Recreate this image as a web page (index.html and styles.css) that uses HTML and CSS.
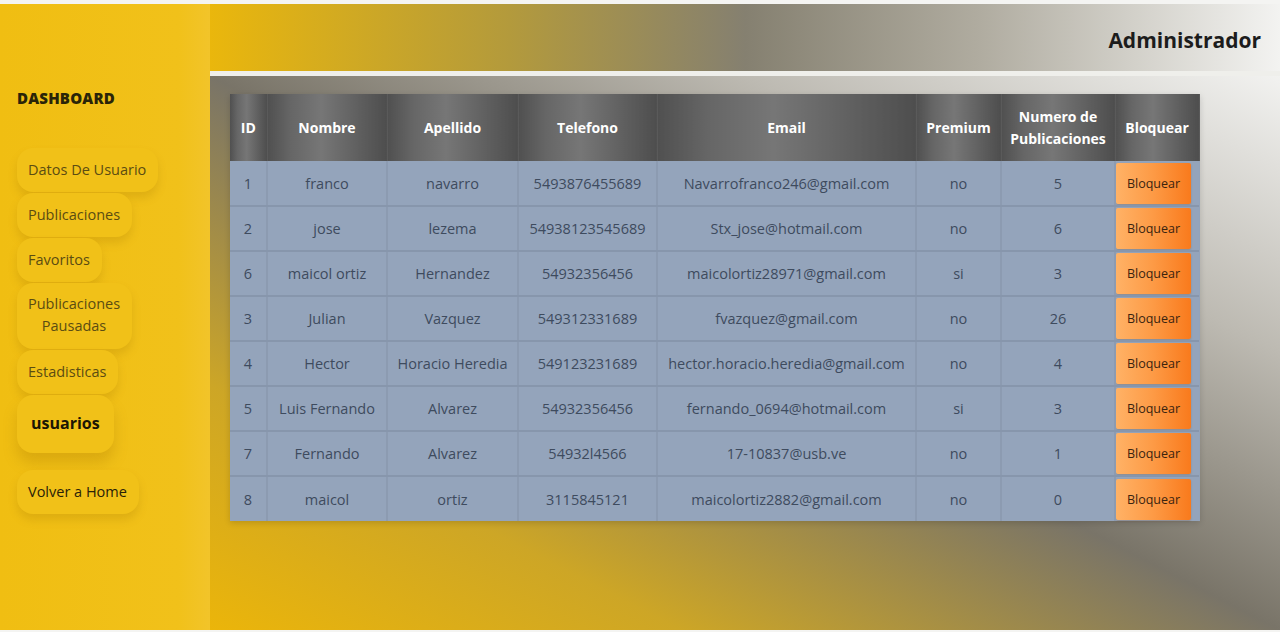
FILE: index.html
```html
<!DOCTYPE html>
<html lang="es">
<head>
<meta charset="utf-8">
<title>Administrador</title>
<link rel="stylesheet" href="styles.css">
</head>
<body>
<div class="page">
  <aside class="sidebar">
    <h2 class="brand">DASHBOARD</h2>
    <nav class="nav">
      <a class="nav-item">Datos De Usuario</a>
      <a class="nav-item">Publicaciones</a>
      <a class="nav-item">Favoritos</a>
      <a class="nav-item two-line">Publicaciones<br>Pausadas</a>
      <a class="nav-item">Estadisticas</a>
      <a class="nav-item active">usuarios</a>
      <a class="nav-item home">Volver a Home</a>
    </nav>
  </aside>
  <main class="main">
    <header class="topbar"><h1 class="title">Administrador</h1></header>
    <section class="content">
      <table class="users">
        <colgroup>
          <col class="w-id"><col class="w-nombre"><col class="w-apellido"><col class="w-tel"><col class="w-email"><col class="w-premium"><col class="w-num"><col class="w-bloq">
        </colgroup>
        <thead>
          <tr><th>ID</th><th>Nombre</th><th>Apellido</th><th>Telefono</th><th>Email</th><th>Premium</th><th>Numero de Publicaciones</th><th>Bloquear</th></tr>
        </thead>
        <tbody>
          <tr><td>1</td><td>franco</td><td>navarro</td><td>5493876455689</td><td>Navarrofranco246@gmail.com</td><td>no</td><td>5</td><td class="act"><button class="btn">Bloquear</button></td></tr>
          <tr><td>2</td><td>jose</td><td>lezema</td><td>54938123545689</td><td>Stx_jose@hotmail.com</td><td>no</td><td>6</td><td class="act"><button class="btn">Bloquear</button></td></tr>
          <tr><td>6</td><td>maicol ortiz</td><td>Hernandez</td><td>54932356456</td><td>maicolortiz28971@gmail.com</td><td>si</td><td>3</td><td class="act"><button class="btn">Bloquear</button></td></tr>
          <tr><td>3</td><td>Julian</td><td>Vazquez</td><td>549312331689</td><td>fvazquez@gmail.com</td><td>no</td><td>26</td><td class="act"><button class="btn">Bloquear</button></td></tr>
          <tr><td>4</td><td>Hector</td><td>Horacio Heredia</td><td>549123231689</td><td>hector.horacio.heredia@gmail.com</td><td>no</td><td>4</td><td class="act"><button class="btn">Bloquear</button></td></tr>
          <tr><td>5</td><td>Luis Fernando</td><td>Alvarez</td><td>54932356456</td><td>fernando_0694@hotmail.com</td><td>si</td><td>3</td><td class="act"><button class="btn">Bloquear</button></td></tr>
          <tr><td>7</td><td>Fernando</td><td>Alvarez</td><td>54932l4566</td><td>17-10837@usb.ve</td><td>no</td><td>1</td><td class="act"><button class="btn">Bloquear</button></td></tr>
          <tr><td>8</td><td>maicol</td><td>ortiz</td><td>3115845121</td><td>maicolortiz2882@gmail.com</td><td>no</td><td>0</td><td class="act"><button class="btn">Bloquear</button></td></tr>
        </tbody>
      </table>
    </section>
  </main>
</div>
</body>
</html>
```

FILE: styles.css
```css
* { box-sizing: border-box; }
html, body { margin: 0; padding: 0; background: #f4f4f2; }
body {
  font-family: "Open Sans", "Noto Sans", "Liberation Sans", sans-serif;
  width: 1280px;
  height: 632px;
  overflow: hidden;
}
.page {
  display: flex;
  margin-top: 4px;
  height: 626px;
}
.sidebar {
  width: 210px;
  flex: none;
  background: linear-gradient(to right, #f0be12 0%, #f1c11a 85%, #f2c42a 100%);
  padding: 85px 0 0 17px;
}
.brand {
  margin: 0;
  font-size: 15px;
  font-weight: 800;
  letter-spacing: 0.2px;
  color: #2a2408;
  line-height: 18px;
}
.nav {
  display: flex;
  flex-direction: column;
  align-items: flex-start;
  gap: 1px;
  margin-top: 41px;
}
.nav-item {
  display: inline-block;
  padding: 12px 12px 12px 11px;
  line-height: 20px;
  font-size: 14.5px;
  color: #5b4c12;
  border-radius: 16px;
  background: #f1c118;
  box-shadow: 0 6px 8px rgba(160, 115, 0, 0.22);
  text-align: center;
}
.nav-item.two-line { line-height: 22px; padding-top: 10px; padding-bottom: 12px; }
.nav-item.active {
  font-weight: 700;
  font-size: 16px;
  color: #1c1604;
  padding: 18px 14px 20px 14px;
  box-shadow: 0 10px 14px rgba(160, 115, 0, 0.28);
}
.nav-item.home {
  margin-top: 16px;
  color: #2a2208;
  font-size: 14.5px;
}
.main {
  flex: 1;
  display: flex;
  flex-direction: column;
  min-width: 0;
}
.topbar {
  height: 72px;
  flex: none;
  background: linear-gradient(to right, #eab70c 0%, #b39a3c 28%, #858070 50%, #b0aca0 72%, #f3f3f1 100%);
  display: flex;
  align-items: center;
  justify-content: flex-end;
  padding-right: 19px;
  border-bottom: 5px solid #efefeb;
}
.title {
  margin: 5px 0 0 0;
  font-size: 21px;
  font-weight: 700;
  color: #1c1c1c;
}
.content {
  flex: 1;
  background: linear-gradient(to top right, #ebb50a 0%, #cda626 22%, #797468 50%, #bdbab2 75%, #f2f2f0 100%);
  padding: 18px 0 0 20px;
}
.users {
  border-collapse: collapse;
  table-layout: fixed;
  width: 969px;
  background: #93a3ba;
  box-shadow: 0 2px 6px rgba(0, 0, 0, 0.15);
}
.w-id { width: 37px; }
.w-nombre { width: 120px; }
.w-apellido { width: 131px; }
.w-tel { width: 139px; }
.w-email { width: 259px; }
.w-premium { width: 85px; }
.w-num { width: 114px; }
.w-bloq { width: 84px; }
.users th {
  height: 67px;
  padding: 0 4px;
  color: #ffffff;
  font-size: 14px;
  font-weight: 700;
  line-height: 22px;
  text-align: center;
  background: linear-gradient(to right, #505050 0%, #666666 20%, #767676 45%, #606060 75%, #4e4e4e 100%);
  border-right: 1px solid #5a5a5a;
}
.users td {
  height: 45px;
  padding: 0 4px;
  text-align: center;
  font-size: 14.5px;
  color: #3e4b5e;
  background: #94a4bb;
  border-right: 2px solid #8c9bb1;
  border-bottom: 2px solid #8796ac;
  white-space: nowrap;
}
.users tr:last-child td { border-bottom: none; }
.users td.act {
  padding: 1px 9px 1px 0;
  border-right: none;
}
.btn {
  display: block;
  width: 75px;
  height: 41px;
  border: none;
  border-radius: 2px;
  background: linear-gradient(to right, #ffb266 0%, #fd9a45 50%, #f97a1c 100%);
  color: #3a2410;
  font-family: "Open Sans", "Noto Sans", "Liberation Sans", sans-serif;
  font-size: 12.5px;
  padding: 0;
  box-shadow: 0 1px 2px rgba(120, 60, 0, 0.25);
}
```
